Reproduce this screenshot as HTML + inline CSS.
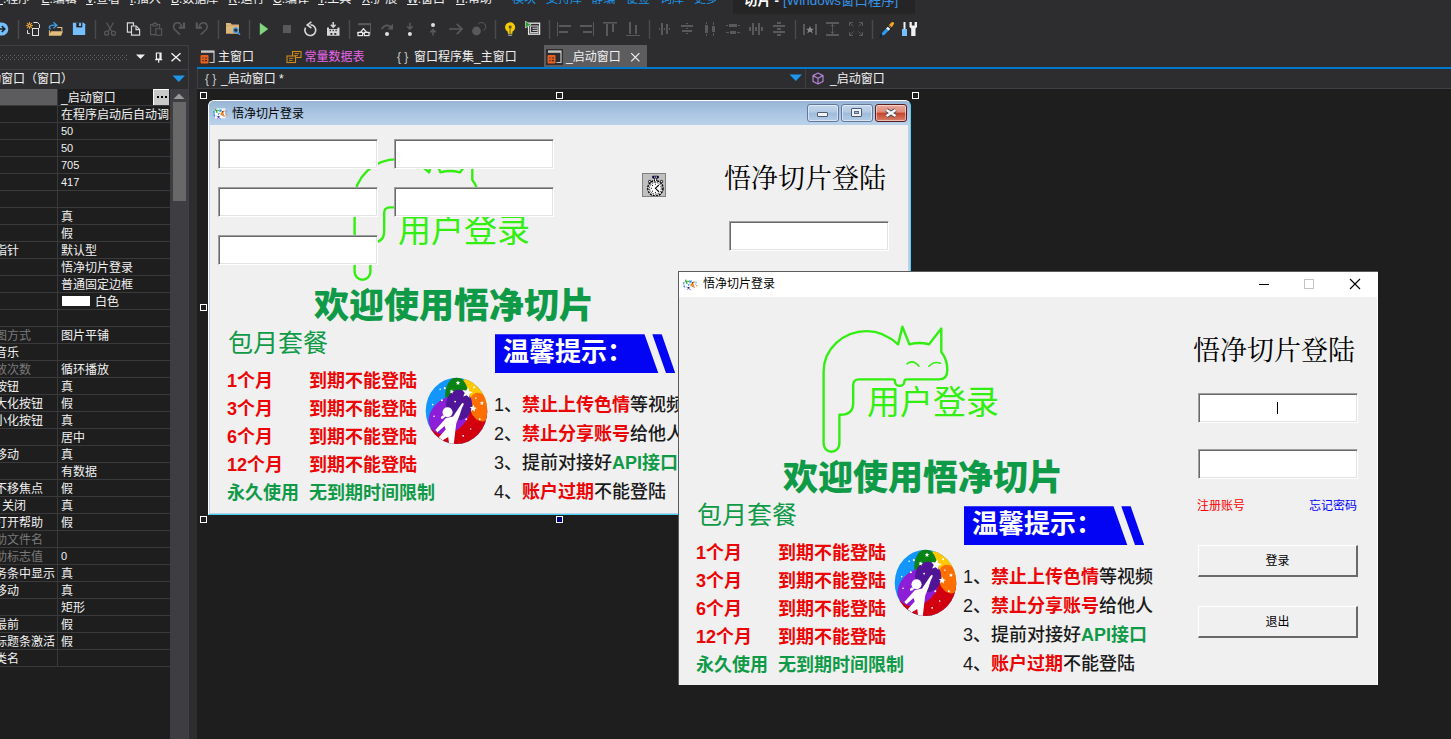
<!DOCTYPE html><html lang="zh-CN"><head><meta charset="utf-8"><title>悟净切片</title><style>
*{box-sizing:border-box;margin:0;padding:0}
html,body{width:1451px;height:739px;overflow:hidden;background:#2d2d30}
body{position:relative;font-family:"Liberation Sans","Noto Sans CJK SC",sans-serif;font-size:12px;color:#f1f1f1;line-height:1}
div,span,svg{position:absolute}
.ht{white-space:nowrap}
.ht span{position:static}
.g{color:#0f9a47;font-weight:bold}
.r{color:#ec0505;font-weight:bold}
.k{color:#1a1a1a;font-weight:500}
.sf{font-family:"Liberation Serif","Noto Serif CJK SC",serif;color:#000}
#menubar{left:0;top:0;width:1451px;height:14px;overflow:hidden}
#apptitle{left:733px;top:0;width:182px;height:14px;background:#252526;overflow:hidden}
#tb{left:0;top:0}
#lp{left:0;top:45px;width:189px;height:694px;background:#2d2d30;border-top:1px solid #3f3f46;border-right:1px solid #3f3f46}
#lphead{left:0;top:0;width:188px;height:24px;border-bottom:1px solid #3f3f46}
#grip{left:0;top:9px;width:124px;height:5px;background-image:radial-gradient(circle,#55555a 0.6px,transparent 0.8px),radial-gradient(circle,#55555a 0.6px,transparent 0.8px);background-size:4px 4px;background-position:0 0,2px 2px}
#lpcombo{left:0;top:24px;width:188px;height:19px}
#grid{left:0;top:43px;width:170px;height:651px;background:#1e1e1e;overflow:hidden}
.row{left:0;width:170px;height:17px;border-bottom:1px solid #3a3a3d}
.row .v{left:57px;top:0;width:113px;height:16px;border-left:1px solid #3a3a3d;overflow:hidden}
.row.dim>.ht{color:#7a7a7a}
.selbg{left:0;top:0;width:57px;height:16px;background:#5c5c5e}
.sw{position:absolute;left:4px;top:3px;width:28px;height:10px;background:#fff;display:block}
#dots{left:153px;top:0;width:16px;height:16px;background:#c9c9c9;border-left:1px solid #fff;border-top:1px solid #fff}
#dots b{position:absolute;top:6px;width:2px;height:2px;background:#000}
#dots b:nth-child(1){left:3px}#dots b:nth-child(2){left:7px}#dots b:nth-child(3){left:11px}
#sb{left:170px;top:43px;width:18px;height:651px;background:#3e3e42}
#thumb{left:3px;top:13px;width:13px;height:99px;background:#686868}
#tabs{left:197px;top:46px;width:1254px;height:21px}
.tab{top:0;height:21px}
.tab .ti{left:.5px;top:4px}
.tab.act{background:#5d5d60;top:-1px;height:22px}
.tab.act .ti{top:5px;left:3px}
#blueline{left:197px;top:67px;width:1254px;height:2px;background:#007acc}
#combos{left:197px;top:69px;width:1254px;height:20px;border-left:1px solid #3f3f46;border-bottom:1px solid #3f3f46;background:#2d2d30}
#surf{left:197px;top:89px;width:1254px;height:650px;background:#1e1e1e;overflow:hidden}
.hd{width:7px;height:7px;border:1px solid #fff;background:#1e1e1e}
/* design form (coords relative to body) */
#dform{left:208px;top:100px;width:703px;height:415px;background:#b9d1ea;border-radius:6px 6px 0 0;overflow:hidden;border:1px solid #fff;border-right-color:#45d2f3;border-bottom-color:#45d2f3}
#dtitle{left:0;top:0;width:701px;height:24px;background:linear-gradient(#98b4d4,#a9c4e2 45%,#bad2ea)}
#dclient{left:1px;top:24px;width:698px;height:388px;background:#f0f0f0;overflow:hidden}
.edit{background:#fff;border:1px solid;border-color:#a0a0a0 #fff #fff #a0a0a0;box-shadow:inset 1px 1px 0 #696969,inset -1px -1px 0 #e3e3e3}
.cb{top:3px;height:18px;border-radius:3px;border:1px solid #62789a;box-shadow:inset 0 0 0 1px rgba(255,255,255,.5);background:linear-gradient(#c3d6ec,#b2c9e4 45%,#9fbbdb 50%,#b5cce6)}
#rwin{left:678px;top:271px;width:700px;height:414px;background:#fff;border-left:1px solid #5b5b5b;border-top:1px solid #5b5b5b}
#rtitle{left:0;top:0;width:699px;height:25px;background:#fff}
#rclient{left:0;top:25px;width:698px;height:388px;background:#f0f0f0;overflow:hidden}
.btn{background:#f0f0f0;border:1px solid #fff;border-right:2px solid #696969;border-bottom:2px solid #696969}
</style></head><body><svg width="0" height="0" style="left:0;top:0"><defs><g id="pic"><path d="M144.6 146.8V74.8C144.6 52 164 34.1 187.8 34.1C200 34.1 211 40 219.1 47.4L223.4 29.7L230.4 47.4Q240 44.6 249.9 47.4L262.3 31.6V54.9Q268.3 62 268.3 72.9Q268.3 82.4 260 82.4H227.6Q225.4 82.4 225.4 84.4A4.7 4.4 0 0 1 216 84.4Q216 82.4 213.8 82.4H180Q174.2 82.4 174.2 88V106Q174.2 117.8 161.3 117.8H160.4V146.8A7.9 7.9 0 0 1 144.6 146.8Z" fill="none" stroke="#33ee11" stroke-width="2.4" stroke-linejoin="round"/><path d="M228 66.8Q234 62 240 69.2M250 69.2Q255 64 261.5 66.2" fill="none" stroke="#33ee11" stroke-width="1.6" stroke-linecap="round"/><clipPath id="lc"><ellipse cx="352" cy="372" rx="268" ry="288"/></clipPath><g transform="translate(246.5 285.8) scale(0.11494) translate(-352 -372)"><g clip-path="url(#lc)"><rect x="60" y="60" width="600" height="640" fill="#1296fa"/><ellipse cx="575" cy="190" rx="200" ry="150" fill="#ffc800"/><ellipse cx="354" cy="235" rx="100" ry="155" fill="#0a8214"/><ellipse cx="450" cy="610" rx="340" ry="270" fill="#d2000f"/><ellipse cx="556" cy="340" rx="88" ry="128" transform="rotate(-16 556 340)" fill="#ff6e00"/><ellipse cx="288" cy="408" rx="196" ry="146" transform="rotate(-38 288 408)" fill="#8c1ed7"/><ellipse cx="375" cy="320" rx="113" ry="132" fill="#501496"/><circle cx="274" cy="385" r="44" fill="#fff"/><ellipse cx="234" cy="426" rx="20" ry="12" transform="rotate(-30 234 426)" fill="#fff"/><path d="M412 305Q420 315 400 345L378 412L350 482L340 560L328 665L288 660L280 600L230 630L198 602L258 535L248 505L186 558L168 540L236 462L258 436L322 422L392 318Q402 300 412 305Z" fill="#fff"/><path d="M455 168L461 200L493 210L464 226L465 259L441 236L410 247L424 217L403 191L436 195Z" fill="#fff"/><path d="M502 320L507 342L529 347L510 358L512 380L495 366L475 375L483 354L468 338L490 339Z" fill="#fff"/><path d="M365 109L371 122L385 124L374 133L377 147L365 139L353 147L356 133L345 124L359 122Z" fill="#fff"/><path d="M314 184L317 199L331 203L318 210L319 224L308 214L295 219L301 206L292 195L306 196Z" fill="#fff"/><path d="M575 286L579 299L592 301L581 308L583 321L572 314L560 319L565 307L556 297L569 298Z" fill="#fff"/><circle cx="210" cy="185" r="7" fill="#fff"/><circle cx="250" cy="175" r="9" fill="#fff"/><circle cx="505" cy="168" r="9" fill="#fff"/><circle cx="520" cy="262" r="7" fill="#fff"/><circle cx="225" cy="280" r="9" fill="#fff"/><circle cx="340" cy="292" r="8" fill="#fff"/><circle cx="145" cy="318" r="7" fill="#fff"/><circle cx="157" cy="420" r="7" fill="#fff"/><circle cx="555" cy="445" r="8" fill="#fff"/><circle cx="437" cy="445" r="9" fill="#fff"/><circle cx="475" cy="530" r="7" fill="#fff"/><circle cx="410" cy="590" r="8" fill="#fff"/></g></g><path d="M285 209.3H434.5L448.3 248H285Z" fill="#0404f4"/><path d="M442.3 209.3H451.7L465.2 248H456Z" fill="#0404f4"/></g></defs></svg><div id="menubar"><span class="ht " style="left:-3px;top:-7px;font-size:12px"><u>F</u>.程序</span><span class="ht " style="left:41.5px;top:-7px;font-size:12px"><u>E</u>.编辑</span><span class="ht " style="left:86px;top:-7px;font-size:12px"><u>V</u>.查看</span><span class="ht " style="left:130px;top:-7px;font-size:12px"><u>I</u>.插入</span><span class="ht " style="left:171px;top:-7px;font-size:12px"><u>B</u>.数据库</span><span class="ht " style="left:228.5px;top:-7px;font-size:12px"><u>R</u>.运行</span><span class="ht " style="left:273px;top:-7px;font-size:12px"><u>C</u>.编译</span><span class="ht " style="left:318px;top:-7px;font-size:12px"><u>T</u>.工具</span><span class="ht " style="left:362px;top:-7px;font-size:12px"><u>X</u>.扩展</span><span class="ht " style="left:407px;top:-7px;font-size:12px"><u>W</u>.窗口</span><span class="ht " style="left:456px;top:-7px;font-size:12px"><u>H</u>.帮助</span><span class="ht " style="left:512px;top:-7px;font-size:12px;color:#1c97ea">模块</span><span class="ht " style="left:546px;top:-7px;font-size:12px;color:#1c97ea">支持库</span><span class="ht " style="left:591.5px;top:-7px;font-size:12px;color:#1c97ea">静编</span><span class="ht " style="left:626px;top:-7px;font-size:12px;color:#1c97ea">便签</span><span class="ht " style="left:660px;top:-7px;font-size:12px;color:#1c97ea">词库</span><span class="ht " style="left:694px;top:-7px;font-size:12px;color:#1c97ea">更多</span><div id="apptitle"><span class="ht " style="left:11px;top:-6.4px;font-size:13.4px;color:#fff;font-weight:bold">切片 - </span><span class="ht " style="left:50px;top:-6.4px;font-size:13.4px;color:#3794e8">[Windows窗口程序]</span></div></div><svg id="tb" width="1451" height="46" viewBox="0 0 1451 46"><path d="M18.5 20V39" stroke="#4a4a4e" stroke-width="1.4"/><path d="M95.5 20V39" stroke="#4a4a4e" stroke-width="1.4"/><path d="M218.5 20V39" stroke="#4a4a4e" stroke-width="1.4"/><path d="M249.5 20V39" stroke="#4a4a4e" stroke-width="1.4"/><path d="M349.5 20V39" stroke="#4a4a4e" stroke-width="1.4"/><path d="M495.5 20V39" stroke="#4a4a4e" stroke-width="1.4"/><path d="M549.5 20V39" stroke="#4a4a4e" stroke-width="1.4"/><path d="M649.5 20V39" stroke="#4a4a4e" stroke-width="1.4"/><path d="M795.5 20V39" stroke="#4a4a4e" stroke-width="1.4"/><path d="M872.5 20V39" stroke="#4a4a4e" stroke-width="1.4"/><circle cx="1.7" cy="29" r="6.6" fill="#75beff"/><path d="M-3 29H4.5M1.8 26L4.8 29L1.8 32" stroke="#1e1e1e" stroke-width="1.5" fill="none"/><g stroke="#e8a33d" stroke-width="1.1"><path d="M29.5 22.1V28.9M26.1 25.5H32.9M27.1 23.1L31.9 27.9M31.9 23.1L27.1 27.9"/></g><circle cx="29.5" cy="25.5" r=".8" fill="#2d2d30"/><path d="M33.5 22.5H37.6L39.5 24.6V28" fill="none" stroke="#e4e4e4" stroke-width="1"/><rect x="32.5" y="28.5" width="6" height="7" fill="none" stroke="#e4e4e4" stroke-width="1"/><path d="M27.5 30.2V33.5H29.8" fill="none" stroke="#e4e4e4" stroke-width="1"/><path d="M50.9 31.2H63L61.1 35.7H49Z" fill="#e2bd7e"/><path d="M49.4 30.2V35.5" stroke="#e2bd7e" stroke-width="1"/><path d="M57.2 27.5H61.8V30.8" fill="none" stroke="#e2bd7e" stroke-width="1.1"/><path d="M50.6 29.4L49.2 27.6Q49.6 25.2 53 25.2H56.6M53.4 22.3L56.9 25.2L53.4 28.3" fill="none" stroke="#3f9ae5" stroke-width="1.3"/><path d="M72.9 22.8H83.8L85.2 24.2V35.1H72.9Z" fill="#75beff"/><rect x="76.3" y="22.8" width="6" height="4.6" fill="#2a2222"/><rect x="78.9" y="23.1" width="2.2" height="2.9" fill="#75beff"/><g fill="none" stroke="#59595c" stroke-width="1.2"><path d="M106.5 22.5L111.8 31.5M113.5 22.5L108.2 31.5"/><circle cx="106.6" cy="33.2" r="2"/><circle cx="113.4" cy="33.2" r="2"/></g><g fill="#2d2d30" stroke="#d6d6d6" stroke-width="1.2"><path d="M127.4 22.8H133.5V32.2H127.4Z"/><path d="M131.5 26H136.2L139.6 29.4V35.2H131.5Z"/><path d="M136 26.2V29.6H139.4" fill="none"/></g><g fill="none" stroke="#59595c" stroke-width="1.1"><path d="M153 24.5H150.6V34.6H155.5M157 24.5H159.6V28.5"/><path d="M153 26V23.8H154.3L155 22.6L155.7 23.8H157V26Z"/><rect x="155.8" y="28.8" width="5.8" height="6.4"/></g><g fill="none" stroke="#59595c" stroke-width="1.5"><path d="M180 34.6L174.6 29.5A4 4 0 1 1 181.5 26.8"/><path d="M184 22.4V27.6H178.8" stroke-width="2.2"/></g><g fill="none" stroke="#59595c" stroke-width="1.5"><path d="M200.8 34.6L206.2 29.5A4 4 0 1 0 199.3 26.8"/><path d="M196.8 22.4V27.6H202" stroke-width="2.2"/></g><path d="M226 23H230.5L231.8 24.6H239V33.8H226Z" fill="#dcb67a"/><path d="M226 25.5H239" stroke="#c9a263" stroke-width=".6"/><circle cx="235.8" cy="30.2" r="2.3" fill="#2d2d30" stroke="#3f9ae5" stroke-width="1.3"/><path d="M237.5 32L240 34.8" stroke="#3f9ae5" stroke-width="1.4"/><path d="M259.8 22.8L268.2 29L259.8 35.2Z" fill="#7fd67f"/><rect x="283" y="25" width="8" height="8" fill="#59595c"/><path d="M310.4 24.7A5.4 5.4 0 1 1 305.5 27.6" fill="none" stroke="#d6d6d6" stroke-width="1.6"/><path d="M311.4 21.8L307.2 25L311.4 28" fill="none" stroke="#d6d6d6" stroke-width="1.6"/><path d="M327 27.5H329V29H337.5V27.5H339.5V35.8H327Z" fill="#d6d6d6"/><path d="M333.2 22V26.6M330.8 24.8L333.2 27.2L335.6 24.8" fill="none" stroke="#d6d6d6" stroke-width="1.5"/><g fill="#2d2d30"><rect x="329.6" y="29.8" width="1.4" height="1.4"/><rect x="332.5" y="29.8" width="1.4" height="1.4"/><rect x="335.4" y="29.8" width="1.4" height="1.4"/><rect x="330.4" y="33" width="2" height="1.8"/><rect x="334.3" y="33" width="2" height="1.8"/></g><rect x="358.2" y="23.1" width="12.8" height="2.1" fill="#59595c"/><rect x="370" y="23.1" width="1" height="11.8" fill="#59595c"/><g fill="none" stroke="#e8e8e8" stroke-width="1.2"><rect x="358" y="32.4" width="4.6" height="3.2"/><rect x="364.4" y="32.4" width="4.6" height="3.2"/><path d="M357.2 33L360.6 32.2L363.5 28.6L366.4 32.2L369.8 33M362.6 33.4H364.4"/></g><path d="M381.6 29Q386 22.5 391.5 27.6" fill="none" stroke="#59595c" stroke-width="1.8"/><path d="M393 23.6V29.6H387.6Z" fill="#59595c"/><circle cx="387" cy="34" r="2" fill="#e0e0e0"/><path d="M409.9 22.8V28.5M407.2 26.3L409.9 29.2L412.6 26.3" fill="none" stroke="#59595c" stroke-width="1.6"/><circle cx="409.9" cy="34" r="2" fill="#e0e0e0"/><path d="M433 35.5V30M430.3 32.4L433 29.6L435.7 32.4" fill="none" stroke="#59595c" stroke-width="1.6"/><circle cx="433" cy="25" r="2" fill="#e0e0e0"/><path d="M449.2 29H462M456.8 23.8L462 29L456.8 34.2" fill="none" stroke="#59595c" stroke-width="1.7"/><circle cx="476.5" cy="31" r="4.4" fill="#59595c"/><path d="M477.9 24.3A4.3 4.3 0 1 1 483.4 30.6" fill="none" stroke="#59595c" stroke-width="1"/><circle cx="510.1" cy="27.3" r="5" fill="#f5cc00"/><path d="M507.8 30H512.4V33.8H507.8Z" fill="#f5cc00"/><rect x="509.3" y="26.2" width="1.7" height="1.7" fill="#f5cc00" stroke="#4a4232" stroke-width="1"/><path d="M510.1 28.6V33.5" stroke="#7a6a32" stroke-width="1.2"/><path d="M508 35.2H512.2" stroke="#bdbdbd" stroke-width="1"/><rect x="528.6" y="23.2" width="11" height="11" fill="#2d2d30" stroke="#e6e6e6" stroke-width="1.3"/><rect x="530.6" y="26" width="7.4" height="6.6" fill="none" stroke="#e6e6e6" stroke-width=".9"/><path d="M532.5 28.2H537.5M532.5 30.4H537.5" stroke="#e6e6e6" stroke-width=".9"/><path d="M525.5 21.2L531 24.6L525.5 28Z" fill="#2f9e2f" stroke="#e6e6e6" stroke-width=".6"/><g fill="#59595c"><rect x="557" y="22" width="1" height="14"/><rect x="559" y="25" width="12" height="2"/><rect x="559" y="31" width="9" height="2"/><rect x="593" y="22" width="1" height="14"/><rect x="580" y="25" width="12" height="2"/><rect x="583" y="31" width="9" height="2"/><rect x="603" y="22" width="14" height="1.6"/><rect x="606" y="24" width="2" height="12"/><rect x="612" y="24" width="2" height="8"/><rect x="626" y="35" width="14" height="1"/><rect x="629" y="22" width="2" height="12"/><rect x="635" y="25" width="2" height="9"/><rect x="661" y="23" width="2" height="12"/><rect x="666" y="24" width="2" height="10"/><rect x="659" y="28" width="1" height="2"/><rect x="664" y="28" width="1" height="2"/><rect x="669" y="28" width="1" height="2"/><rect x="681" y="25" width="12" height="2"/><rect x="682" y="30" width="10" height="2"/><rect x="686" y="23" width="2" height="1"/><rect x="686" y="28" width="2" height="1"/><rect x="686" y="33" width="2" height="1"/><rect x="705" y="25" width="3" height="8"/><rect x="712" y="26" width="3" height="6"/><rect x="706" y="22" width="1" height="2"/><rect x="706" y="34" width="1" height="2"/><rect x="713" y="22" width="1" height="3"/><rect x="713" y="33" width="1" height="3"/><rect x="729" y="24" width="8" height="3"/><rect x="730" y="31" width="6" height="3"/><rect x="726" y="25" width="2" height="1"/><rect x="738" y="25" width="2" height="1"/><rect x="726" y="32" width="3" height="1"/><rect x="737" y="32" width="3" height="1"/><rect x="752" y="23" width="2" height="12"/><rect x="758" y="23" width="2" height="12"/><rect x="749" y="27" width="2" height="4"/><rect x="755" y="27" width="2" height="4"/><rect x="761" y="27" width="2" height="4"/><rect x="773" y="25" width="12" height="2"/><rect x="773" y="31" width="12" height="2"/><rect x="777" y="22" width="4" height="2"/><rect x="777" y="28" width="4" height="2"/><rect x="777" y="34" width="4" height="2"/><rect x="803" y="24" width="2" height="11"/><rect x="815" y="24" width="2" height="11"/><path d="M810 26L811.2 28.8H814L811.8 30.6L812.8 33.4L810 31.6L807.2 33.4L808.2 30.6L806 28.8H808.8Z" fill="#8a8a8a"/><rect x="826" y="22" width="13" height="2"/><rect x="826" y="34" width="13" height="2"/><rect x="832" y="24" width="1" height="10"/></g><path d="M830.5 26.5L832.5 24.5L834.5 26.5M830.5 31.5L832.5 33.5L834.5 31.5" fill="none" stroke="#59595c" stroke-width=".8"/><g fill="none" stroke="#59595c" stroke-width="1"><path d="M849.5 26V22.5H853M849.5 22.5L853.5 26.5"/><path d="M862.5 26V22.5H859M862.5 22.5L858.5 26.5"/><path d="M849.5 32V35.5H853M849.5 35.5L853.5 31.5"/><path d="M862.5 32V35.5H859M862.5 35.5L858.5 31.5"/></g><path d="M881 36L882.4 32.6L888.2 26.4L890.6 28.6L884.6 34.8Z" fill="#2f9bf0"/><path d="M886.2 28.4L888.8 25.6L891.2 27.8L888.6 30.6Z" fill="#f2f2f2"/><path d="M889 25L891.6 22.2Q893.6 21.4 894.2 23.4L891.8 27.2Z" fill="#f5a623"/><path d="M879.8 37.8L881.8 34.2" stroke="#06263f" stroke-width="1.8"/><path d="M887.4 25.6L891.4 29" stroke="#20160a" stroke-width="1.2"/><rect x="903.5" y="22" width="2" height="7" fill="#f0f0f0"/><rect x="902" y="29" width="5" height="7" fill="#75beff"/><path d="M909.5 22H911.8V25.5H914.6V22H917V27L915.5 28.5V36H911.2V28.5L909.5 27Z" fill="#f0f0f0"/></svg><div id="lp"><div id="lphead"><svg width="128" height="5" style="left:0;top:9px"><defs><pattern id="gp" width="4" height="4" patternUnits="userSpaceOnUse"><rect x="2" y="0" width="1" height="1" fill="#626267"/><rect x="0" y="2" width="1" height="1" fill="#626267"/></pattern></defs><rect width="128" height="5" fill="url(#gp)"/></svg><svg width="60" height="22" style="left:130px;top:0px" viewBox="130 46 60 22"><path d="M136 54.5H145L140.5 59Z" fill="#f1f1f1"/><path d="M156.4 53H161V59.2H156.4ZM155.2 59.6H162.2M158.7 59.6V62.8" fill="none" stroke="#f1f1f1" stroke-width="1.2"/><rect x="159.4" y="53" width="1.6" height="6.2" fill="#f1f1f1"/><path d="M171.5 53.2L180.5 61.2M180.5 53.2L171.5 61.2" stroke="#f1f1f1" stroke-width="1.4"/></svg></div><div id="lpcombo"><span class="ht " style="left:-11px;top:3px;font-size:12px">动窗口（窗口）</span><svg width="14" height="8" style="left:172px;top:5px"><path d="M0.5 0.5H13L6.8 7Z" fill="#1c97ea"/></svg></div><div id="grid"><div class="row sel" style="top:0px"><div class="selbg"></div><div class="v"><span class="ht " style="left:3px;top:2.6px;font-size:12px">_启动窗口</span></div></div><div class="row " style="top:17px"><div class="v"><span class="ht " style="left:3px;top:2.6px;font-size:12px">在程序启动后自动调.</span></div></div><div class="row " style="top:34px"><div class="v"><span class="ht " style="left:3px;top:3.4px;font-size:11px">50</span></div></div><div class="row " style="top:51px"><div class="v"><span class="ht " style="left:3px;top:3.4px;font-size:11px">50</span></div></div><div class="row " style="top:68px"><div class="v"><span class="ht " style="left:3px;top:3.4px;font-size:11px">705</span></div></div><div class="row " style="top:85px"><div class="v"><span class="ht " style="left:3px;top:3.4px;font-size:11px">417</span></div></div><div class="row " style="top:102px"><div class="v"></div></div><div class="row " style="top:119px"><div class="v"><span class="ht " style="left:3px;top:2.6px;font-size:12px">真</span></div></div><div class="row " style="top:136px"><div class="v"><span class="ht " style="left:3px;top:2.6px;font-size:12px">假</span></div></div><div class="row " style="top:153px"><span class="ht " style="left:-5px;top:2.6px;font-size:12px">指针</span><div class="v"><span class="ht " style="left:3px;top:2.6px;font-size:12px">默认型</span></div></div><div class="row " style="top:170px"><div class="v"><span class="ht " style="left:3px;top:2.6px;font-size:12px">悟净切片登录</span></div></div><div class="row " style="top:187px"><div class="v"><span class="ht " style="left:3px;top:2.6px;font-size:12px">普通固定边框</span></div></div><div class="row " style="top:204px"><div class="v"><i class="sw"></i><span class="ht " style="left:37px;top:2.6px;font-size:12px">白色</span></div></div><div class="row " style="top:221px"><div class="v"></div></div><div class="row dim" style="top:238px"><span class="ht " style="left:-5px;top:2.6px;font-size:12px">图方式</span><div class="v"><span class="ht " style="left:3px;top:2.6px;font-size:12px">图片平铺</span></div></div><div class="row " style="top:255px"><span class="ht " style="left:-5px;top:2.6px;font-size:12px">音乐</span><div class="v"></div></div><div class="row dim" style="top:272px"><span class="ht " style="left:-5px;top:2.6px;font-size:12px">放次数</span><div class="v"><span class="ht " style="left:3px;top:2.6px;font-size:12px">循环播放</span></div></div><div class="row " style="top:289px"><span class="ht " style="left:-5px;top:2.6px;font-size:12px">按钮</span><div class="v"><span class="ht " style="left:3px;top:2.6px;font-size:12px">真</span></div></div><div class="row " style="top:306px"><span class="ht " style="left:-5px;top:2.6px;font-size:12px">大化按钮</span><div class="v"><span class="ht " style="left:3px;top:2.6px;font-size:12px">假</span></div></div><div class="row " style="top:323px"><span class="ht " style="left:-5px;top:2.6px;font-size:12px">小化按钮</span><div class="v"><span class="ht " style="left:3px;top:2.6px;font-size:12px">真</span></div></div><div class="row " style="top:340px"><div class="v"><span class="ht " style="left:3px;top:2.6px;font-size:12px">居中</span></div></div><div class="row " style="top:357px"><span class="ht " style="left:-5px;top:2.6px;font-size:12px">移动</span><div class="v"><span class="ht " style="left:3px;top:2.6px;font-size:12px">真</span></div></div><div class="row " style="top:374px"><div class="v"><span class="ht " style="left:3px;top:2.6px;font-size:12px">有数据</span></div></div><div class="row " style="top:391px"><span class="ht " style="left:-5px;top:2.6px;font-size:12px">不移焦点</span><div class="v"><span class="ht " style="left:3px;top:2.6px;font-size:12px">假</span></div></div><div class="row " style="top:408px"><span class="ht " style="left:2px;top:2.6px;font-size:12px">关闭</span><div class="v"><span class="ht " style="left:3px;top:2.6px;font-size:12px">真</span></div></div><div class="row " style="top:425px"><span class="ht " style="left:-5px;top:2.6px;font-size:12px">打开帮助</span><div class="v"><span class="ht " style="left:3px;top:2.6px;font-size:12px">假</span></div></div><div class="row dim" style="top:442px"><span class="ht " style="left:-5px;top:2.6px;font-size:12px">助文件名</span><div class="v"></div></div><div class="row dim" style="top:459px"><span class="ht " style="left:-5px;top:2.6px;font-size:12px">助标志值</span><div class="v"><span class="ht " style="left:3px;top:3.4px;font-size:11px">0</span></div></div><div class="row " style="top:476px"><span class="ht " style="left:-5px;top:2.6px;font-size:12px">务条中显示</span><div class="v"><span class="ht " style="left:3px;top:2.6px;font-size:12px">真</span></div></div><div class="row " style="top:493px"><span class="ht " style="left:-5px;top:2.6px;font-size:12px">移动</span><div class="v"><span class="ht " style="left:3px;top:2.6px;font-size:12px">真</span></div></div><div class="row " style="top:510px"><div class="v"><span class="ht " style="left:3px;top:2.6px;font-size:12px">矩形</span></div></div><div class="row " style="top:527px"><span class="ht " style="left:-5px;top:2.6px;font-size:12px">最前</span><div class="v"><span class="ht " style="left:3px;top:2.6px;font-size:12px">假</span></div></div><div class="row " style="top:544px"><span class="ht " style="left:-5px;top:2.6px;font-size:12px">标题条激活</span><div class="v"><span class="ht " style="left:3px;top:2.6px;font-size:12px">假</span></div></div><div class="row " style="top:561px"><span class="ht " style="left:-5px;top:2.6px;font-size:12px">类名</span><div class="v"></div></div><div id="dots"><b></b><b></b><b></b></div></div><div id="sb"><svg width="18" height="12" style="left:0;top:1px"><path d="M3.5 9L9 3.5L14.5 9Z" fill="#999"/></svg><div id="thumb"></div></div></div><div id="tabs"><div class="tab" style="left:2px"><svg class="ti" width="15" height="14" viewBox="0 0 15 14"><path d="M1 1H14V12.5H9.5" fill="none" stroke="#c8c8c8" stroke-width="1.2"/><rect x="1" y="0.8" width="13" height="2" fill="#c8c8c8"/><rect x="0.5" y="5" width="8" height="8.5" rx="1" fill="#e8601c"/><path d="M2.3 8H3.6M4.8 8H7M2.3 10.6H3.6M4.8 10.6H7" stroke="#2d2d30" stroke-width="1.1"/></svg><span class="ht " style="left:19px;top:5px;font-size:12px">主窗口</span></div><div class="tab" style="left:88px"><svg class="ti" width="16" height="14" viewBox="0 0 16 14"><rect x="6.5" y="1.5" width="8.5" height="6" fill="none" stroke="#d08a1a" stroke-width="1.1"/><path d="M8.5 3.6H13M8.5 5.6H12" stroke="#d08a1a" stroke-width=".9"/><rect x="1" y="6" width="8.5" height="6.5" fill="#2d2d30" stroke="#d08a1a" stroke-width="1.1"/><path d="M3 8.3H7.5M3 10.4H6.5" stroke="#d08a1a" stroke-width=".9"/></svg><span class="ht " style="left:19.5px;top:5px;font-size:12px;color:#e966e9">常量数据表</span></div><div class="tab" style="left:199px"><span class="ht " style="left:1px;top:5px;font-size:12px;color:#c8c8c8">{ }</span><span class="ht " style="left:18px;top:5px;font-size:12px">窗口程序集_主窗口</span></div><div class="tab act" style="left:347px;width:103px"><i style="position:absolute;left:2px;top:4px;width:17px;height:16px;background:#2d2d30"></i><svg class="ti" width="15" height="14" viewBox="0 0 15 14"><path d="M1 1H14V12.5H9.5" fill="none" stroke="#c8c8c8" stroke-width="1.2"/><rect x="1" y="0.8" width="13" height="2" fill="#c8c8c8"/><rect x="0.5" y="5" width="8" height="8.5" rx="1" fill="#e8601c"/><path d="M2.3 8H3.6M4.8 8H7M2.3 10.6H3.6M4.8 10.6H7" stroke="#2d2d30" stroke-width="1.1"/></svg><span class="ht " style="left:22px;top:6px;font-size:12px">_启动窗口</span><svg width="11" height="11" style="left:86px;top:7px"><path d="M1.2 1.2L9.4 9.4M9.4 1.2L1.2 9.4" stroke="#f1f1f1" stroke-width="1.2"/></svg></div></div><div id="blueline"></div><div id="combos"><span class="ht " style="left:7px;top:4px;font-size:12px;color:#c8c8c8">{ }</span><span class="ht " style="left:23px;top:4px;font-size:12px">_启动窗口 *</span><svg width="14" height="8" style="left:591px;top:5px"><path d="M0.5 0.5H13L6.8 7Z" fill="#1c97ea"/></svg><div style="left:607px;top:0;width:1px;height:19px;background:#3f3f46"></div><svg width="12" height="13" style="left:614px;top:3px" viewBox="0 0 12 13"><path d="M6 1L11 3.6V9.4L6 12L1 9.4V3.6Z M1 3.6L6 6.2L11 3.6M6 6.2V12" fill="none" stroke="#b180d7" stroke-width="1.2" stroke-linejoin="round"/></svg><span class="ht " style="left:632px;top:4px;font-size:12px">_启动窗口</span></div><div id="surf"></div><div class="hd" style="left:200px;top:92px"></div><div class="hd" style="left:556px;top:92px"></div><div class="hd" style="left:912px;top:92px"></div><div class="hd" style="left:200px;top:304px"></div><div class="hd" style="left:912px;top:304px"></div><div class="hd" style="left:200px;top:516px"></div><div class="hd" style="left:556px;top:516px;background:#000080"></div><div class="hd" style="left:912px;top:516px"></div><div id="dform"><div id="dtitle"><svg width="15" height="12" style="left:4px;top:7px" viewBox="0 0 15 12"><rect x="2" y="0.5" width="10.4" height="9.8" fill="#fff"/><path d="M0.8 3V5.5M1 6.5L2 8.5M0.3 7L1.3 7.6" stroke="#2d9be6" stroke-width="1.1"/><path d="M2.6 0.6L3 3.2M3.6 1.8L4 4.8M4.6 2.4H5.8" stroke="#22a822" stroke-width="1.2"/><path d="M6 1.5H9L8.6 3.2L6.6 4.4Z" fill="#2d9be6"/><path d="M8 6L9.8 7.6M5 6.5L6.4 5.2" stroke="#2d9be6" stroke-width="1.2"/><path d="M11.5 2.6L7.6 6.2M9 3.4L11.4 8.8M7.6 6.2L9.4 6.6" stroke="#ff7d10" stroke-width="1.3"/><path d="M3.6 8L7.6 10.8M6.6 7.8L4.4 10.6" stroke="#7a5ee0" stroke-width="1"/><path d="M13 2.5V4.5M12.6 5.6L13.6 6.6" stroke="#2d9be6" stroke-width="1"/><rect x="13.2" y="6.2" width="1.2" height="1.2" fill="#ff8a10"/><rect x="9.1" y="3.3" width="1" height="1" fill="#111"/><rect x="5" y="8.2" width="1.2" height="1" fill="#111"/></svg><span class="ht " style="left:23px;top:7px;font-size:12px;color:#000">悟净切片登录</span><div class="cb" style="left:598px;width:32px"><i style="position:absolute;left:9px;top:7px;width:11px;height:5px;background:#f4f4f4;border:1px solid #4a5a70;border-radius:1px"></i></div><div class="cb" style="left:632px;width:32px"><i style="position:absolute;left:9px;top:3px;width:11px;height:9px;background:#f0f0f0;border:1px solid #4a5a70;border-radius:1px"></i><i style="position:absolute;left:12px;top:6px;width:5px;height:3px;background:#9fbbdb;border:1px solid #55698a"></i></div><div class="cb" style="left:666px;width:32px;border-color:#5a1a1c;background:linear-gradient(#e8a89a,#dd8a78 45%,#c5432a 50%,#d8806a)"><svg width="14" height="10" style="left:8px;top:3px"><path d="M2.5 2L11.5 8M11.5 2L2.5 8" stroke="#3a4656" stroke-width="4"/><path d="M2.5 2L11.5 8M11.5 2L2.5 8" stroke="#f6f6f6" stroke-width="2.6"/></svg></div></div><div id="dclient"><svg width="698" height="388" style="left:0;top:0"><use href="#pic"/></svg><span class="ht" style="left:188px;top:89px;font-size:33px;color:#33ee11">用户登录</span><span class="ht g" style="left:104px;top:163px;font-size:35px;font-weight:900">欢迎使用悟净切片</span><span class="ht" style="left:18px;top:206px;font-size:25px;color:#0f9a47">包月套餐</span><span class="ht" style="left:293px;top:214px;font-size:26px;color:#fff;font-weight:bold">温馨提示：</span><span class="ht sf" style="left:514px;top:41px;font-size:27px">悟净切片登陆</span><span class="ht r" style="left:17px;top:247px;font-size:18px">1个月</span><span class="ht r" style="left:99px;top:247px;font-size:18px">到期不能登陆</span><span class="ht r" style="left:17px;top:275px;font-size:18px">3个月</span><span class="ht r" style="left:99px;top:275px;font-size:18px">到期不能登陆</span><span class="ht r" style="left:17px;top:303px;font-size:18px">6个月</span><span class="ht r" style="left:99px;top:303px;font-size:18px">到期不能登陆</span><span class="ht r" style="left:17px;top:331px;font-size:18px">12个月</span><span class="ht r" style="left:99px;top:331px;font-size:18px">到期不能登陆</span><span class="ht g" style="left:17px;top:359px;font-size:18px">永久使用</span><span class="ht g" style="left:99px;top:359px;font-size:18px">无到期时间限制</span><span class="ht k" style="left:284px;top:271px;font-size:18px">1、<span class="r">禁止上传色情</span>等视频</span><span class="ht k" style="left:284px;top:300px;font-size:18px">2、<span class="r">禁止分享账号</span>给他人</span><span class="ht k" style="left:284px;top:329px;font-size:18px">3、提前对接好<span class="g">API接口</span></span><span class="ht k" style="left:284px;top:358px;font-size:18px">4、<span class="r">账户过期</span>不能登陆</span><div class="edit" style="left:8px;top:14px;width:160px;height:30px"></div><div class="edit" style="left:184px;top:14px;width:160px;height:30px"></div><div class="edit" style="left:8px;top:62px;width:160px;height:30px"></div><div class="edit" style="left:184px;top:62px;width:160px;height:30px"></div><div class="edit" style="left:8px;top:110px;width:160px;height:30px"></div><div class="edit" style="left:519px;top:96px;width:160px;height:30px"></div><div style="left:432px;top:48px;width:24px;height:24px;background:#c0c0c0;border:1px solid #808080"><svg width="22" height="22" viewBox="0 0 22 22" style="left:0;top:0"><circle cx="12.4" cy="14.3" r="7.6" fill="#fff" stroke="#000" stroke-width="1.5" stroke-dasharray="2.2 .9"/><circle cx="12.4" cy="14.3" r="5.9" fill="#fff" stroke="#000" stroke-width=".9" stroke-dasharray="1.6 1"/><rect x="9.2" y="1.8" width="6.6" height="2.6" rx="1" fill="#000"/><rect x="10.6" y="2.5" width="3.6" height="1.1" fill="#2a2ad0"/><rect x="11.3" y="2.6" width="1" height="1" fill="#fff"/><rect x="13" y="2.6" width="1" height="1" fill="#fff"/><rect x="11.3" y="4.4" width="2.4" height="2.8" fill="#000"/><rect x="12" y="4.6" width="1" height="2.6" fill="#fff"/><circle cx="6.7" cy="7.6" r="1.2" fill="#fff" stroke="#000" stroke-width="1"/><circle cx="18.5" cy="7.6" r="1.2" fill="#fff" stroke="#000" stroke-width="1"/><rect x="14.8" y="16.7" width="1" height="1" fill="#000"/><rect x="11.9" y="17.9" width="1" height="1" fill="#000"/><rect x="9.0" y="16.7" width="1" height="1" fill="#000"/><rect x="7.8" y="13.8" width="1" height="1" fill="#000"/><rect x="9.0" y="10.9" width="1" height="1" fill="#000"/><rect x="11.9" y="9.7" width="1" height="1" fill="#000"/><rect x="14.8" y="10.9" width="1" height="1" fill="#000"/><path d="M15.8 11.2L12.4 14.3L15.8 17.6" fill="none" stroke="#000" stroke-width="1.1"/></svg></div></div></div><div id="rwin"><div id="rtitle"><svg width="15" height="12" style="left:4px;top:7px" viewBox="0 0 15 12"><rect x="2" y="0.5" width="10.4" height="9.8" fill="#fff"/><path d="M0.8 3V5.5M1 6.5L2 8.5M0.3 7L1.3 7.6" stroke="#2d9be6" stroke-width="1.1"/><path d="M2.6 0.6L3 3.2M3.6 1.8L4 4.8M4.6 2.4H5.8" stroke="#22a822" stroke-width="1.2"/><path d="M6 1.5H9L8.6 3.2L6.6 4.4Z" fill="#2d9be6"/><path d="M8 6L9.8 7.6M5 6.5L6.4 5.2" stroke="#2d9be6" stroke-width="1.2"/><path d="M11.5 2.6L7.6 6.2M9 3.4L11.4 8.8M7.6 6.2L9.4 6.6" stroke="#ff7d10" stroke-width="1.3"/><path d="M3.6 8L7.6 10.8M6.6 7.8L4.4 10.6" stroke="#7a5ee0" stroke-width="1"/><path d="M13 2.5V4.5M12.6 5.6L13.6 6.6" stroke="#2d9be6" stroke-width="1"/><rect x="13.2" y="6.2" width="1.2" height="1.2" fill="#ff8a10"/><rect x="9.1" y="3.3" width="1" height="1" fill="#111"/><rect x="5" y="8.2" width="1.2" height="1" fill="#111"/></svg><span class="ht " style="left:24px;top:6px;font-size:12px;color:#000">悟净切片登录</span><svg width="140" height="25" style="left:559px;top:0" viewBox="1238 272 140 25"><path d="M1259 284.5H1269" stroke="#000" stroke-width="1"/><rect x="1304.5" y="279.5" width="9" height="9" fill="none" stroke="#c4c4c4" stroke-width="1"/><path d="M1350 279L1360 289M1360 279L1350 289" stroke="#000" stroke-width="1.1"/></svg></div><div id="rclient"><svg width="698" height="388" style="left:0;top:0"><use href="#pic"/></svg><span class="ht" style="left:188px;top:89px;font-size:33px;color:#33ee11">用户登录</span><span class="ht g" style="left:104px;top:163px;font-size:35px;font-weight:900">欢迎使用悟净切片</span><span class="ht" style="left:18px;top:206px;font-size:25px;color:#0f9a47">包月套餐</span><span class="ht" style="left:293px;top:214px;font-size:26px;color:#fff;font-weight:bold">温馨提示：</span><span class="ht sf" style="left:514px;top:41px;font-size:27px">悟净切片登陆</span><span class="ht r" style="left:17px;top:247px;font-size:18px">1个月</span><span class="ht r" style="left:99px;top:247px;font-size:18px">到期不能登陆</span><span class="ht r" style="left:17px;top:275px;font-size:18px">3个月</span><span class="ht r" style="left:99px;top:275px;font-size:18px">到期不能登陆</span><span class="ht r" style="left:17px;top:303px;font-size:18px">6个月</span><span class="ht r" style="left:99px;top:303px;font-size:18px">到期不能登陆</span><span class="ht r" style="left:17px;top:331px;font-size:18px">12个月</span><span class="ht r" style="left:99px;top:331px;font-size:18px">到期不能登陆</span><span class="ht g" style="left:17px;top:359px;font-size:18px">永久使用</span><span class="ht g" style="left:99px;top:359px;font-size:18px">无到期时间限制</span><span class="ht k" style="left:284px;top:271px;font-size:18px">1、<span class="r">禁止上传色情</span>等视频</span><span class="ht k" style="left:284px;top:300px;font-size:18px">2、<span class="r">禁止分享账号</span>给他人</span><span class="ht k" style="left:284px;top:329px;font-size:18px">3、提前对接好<span class="g">API接口</span></span><span class="ht k" style="left:284px;top:358px;font-size:18px">4、<span class="r">账户过期</span>不能登陆</span><div class="edit" style="left:519px;top:96px;width:160px;height:30px"></div><div class="edit" style="left:519px;top:152px;width:160px;height:30px"></div><div style="left:598px;top:105px;width:1px;height:12px;background:#000"></div><span class="ht " style="left:518px;top:203px;font-size:12px;color:#f00">注册账号</span><span class="ht " style="left:630px;top:203px;font-size:12px;color:#00f">忘记密码</span><div class="btn" style="left:519px;top:248px;width:160px;height:32px"></div><span class="ht " style="left:586.5px;top:258px;font-size:12px;color:#000">登录</span><div class="btn" style="left:519px;top:309px;width:160px;height:32px"></div><span class="ht " style="left:586.5px;top:319px;font-size:12px;color:#000">退出</span></div></div></body></html>
